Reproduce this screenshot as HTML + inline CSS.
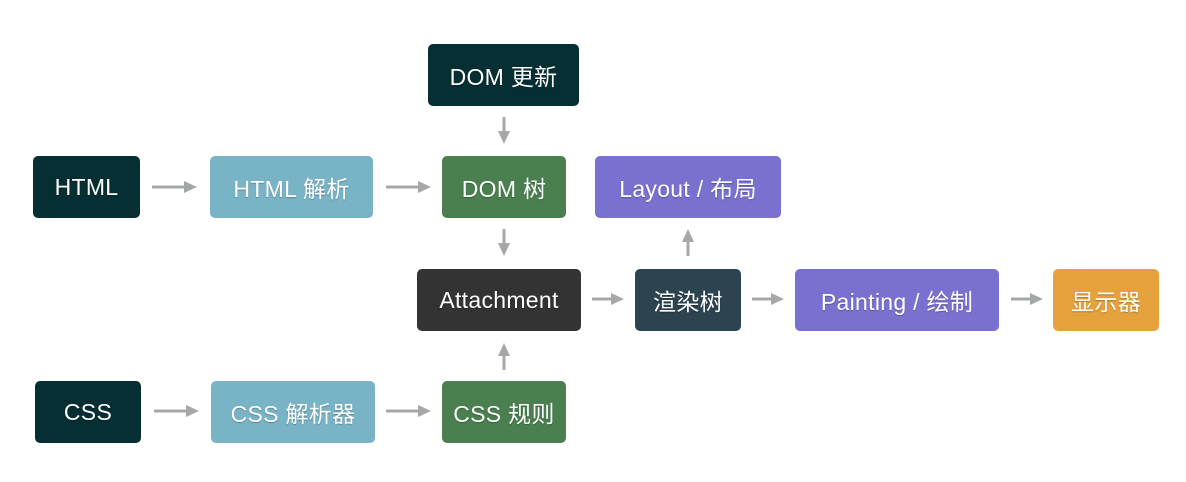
<!DOCTYPE html>
<html><head><meta charset="utf-8"><style>
body{margin:0;width:1186px;height:482px;background:#fff;position:relative;overflow:hidden;font-family:"Liberation Sans","Noto Sans CJK SC",sans-serif}
.b{position:absolute;height:62px;border-radius:5px;color:#fff;font-size:23px;letter-spacing:0.3px;display:flex;align-items:center;justify-content:center;text-shadow:0 1px 1px rgba(0,0,0,.25);white-space:nowrap}
svg{position:absolute;left:0;top:0}
</style></head><body>
<div class="b" style="left:428px;top:44px;width:151px;background:#062f33">DOM 更新</div>
<div class="b" style="left:33px;top:156px;width:107px;background:#062f33">HTML</div>
<div class="b" style="left:210px;top:156px;width:163px;background:#79b3c6">HTML 解析</div>
<div class="b" style="left:442px;top:156px;width:124px;background:#4a7f50">DOM 树</div>
<div class="b" style="left:595px;top:156px;width:186px;background:#7a70cf">Layout / 布局</div>
<div class="b" style="left:417px;top:269px;width:164px;background:#333">Attachment</div>
<div class="b" style="left:635px;top:269px;width:106px;background:#2c4350">渲染树</div>
<div class="b" style="left:795px;top:269px;width:204px;background:#7a70cf">Painting / 绘制</div>
<div class="b" style="left:1053px;top:269px;width:106px;background:#e5a23c">显示器</div>
<div class="b" style="left:35px;top:381px;width:106px;background:#062f33">CSS</div>
<div class="b" style="left:211px;top:381px;width:164px;background:#79b3c6">CSS 解析器</div>
<div class="b" style="left:442px;top:381px;width:124px;background:#4a7f50">CSS 规则</div>
<svg width="1186" height="482" fill="#a6a8a8" stroke="#a6a8a8">
<g stroke-width="3">
<line x1="152" y1="187" x2="184" y2="187"/><line x1="386" y1="187" x2="418" y2="187"/>
<line x1="154" y1="411" x2="186" y2="411"/><line x1="386" y1="411" x2="418" y2="411"/>
<line x1="592" y1="299" x2="612" y2="299"/><line x1="752" y1="299" x2="772" y2="299"/><line x1="1011" y1="299" x2="1031" y2="299"/>
<line x1="504" y1="117" x2="504" y2="132"/><line x1="504" y1="229" x2="504" y2="244"/>
<line x1="688" y1="256" x2="688" y2="241"/><line x1="504" y1="370" x2="504" y2="355"/>
</g>
<g stroke="none">
<polygon points="184,181 197,187 184,193"/><polygon points="418,181 431,187 418,193"/>
<polygon points="186,405 199,411 186,417"/><polygon points="418,405 431,411 418,417"/>
<polygon points="611,293 624,299 611,305"/><polygon points="771,293 784,299 771,305"/><polygon points="1030,293 1043,299 1030,305"/>
<polygon points="498,131 504,144 510,131"/><polygon points="498,243 504,256 510,243"/>
<polygon points="682,242 688,229 694,242"/><polygon points="498,356 504,343 510,356"/>
</g></svg>
</body></html>
